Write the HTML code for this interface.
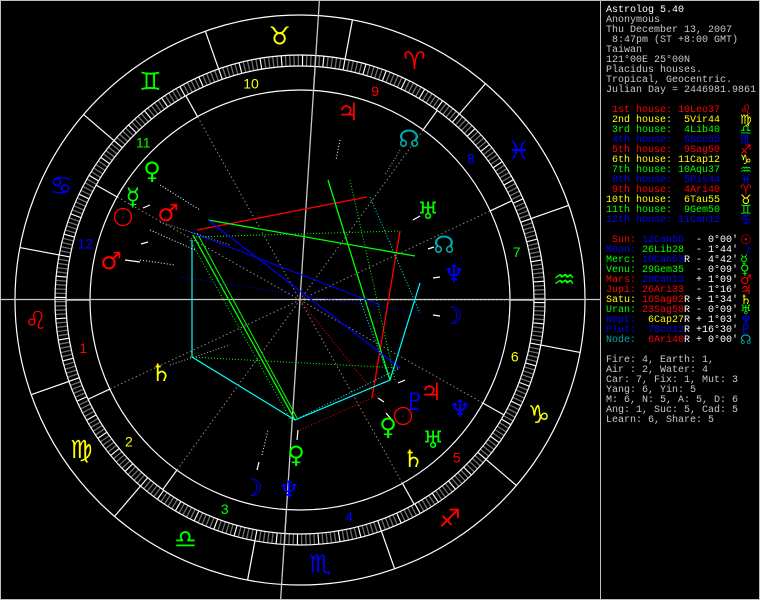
<!DOCTYPE html>
<html><head><meta charset="utf-8"><style>
html,body{margin:0;padding:0;background:#000;}
#w{position:relative;width:760px;height:600px;background:#000;overflow:hidden;}
#frame{position:absolute;left:0;top:0;width:758px;height:598px;border:1px solid #c0c0c0;}
#div{position:absolute;left:600px;top:0;width:1px;height:600px;background:#c0c0c0;}
#p{position:absolute;left:606px;top:6px;font:10px/10px "Liberation Mono",monospace;white-space:pre;color:#fff;}
#p div{height:10px;}
.r{color:#f00}.y{color:#ff0}.g{color:#0f0}.b{color:#00f}.t{color:#0aa}.h{color:#c8c8c8}
.gl{position:absolute;font:13px/10px "DejaVu Sans",sans-serif;}
svg{position:absolute;left:0;top:0;}
</style></head><body><div id="w">
<svg id="s" width="600" height="600" viewBox="0 0 600 600"></svg>
<div id="frame"></div><div id="div"></div>
<div id="p"><div>Astrolog 5.40</div><div class="h">Anonymous</div><div class="h">Thu December 13, 2007</div><div class="h"> 8:47pm (ST +8:00 GMT)</div><div class="h">Taiwan</div><div class="h">121°00E 25°00N</div><div class="h">Placidus houses.</div><div class="h">Tropical, Geocentric.</div><div class="h">Julian Day = 2446981.9861</div><div></div><div class="r"> 1st house: 10Leo37</div><div class="y"> 2nd house:  5Vir44</div><div class="g"> 3rd house:  4Lib40</div><div class="b"> 4th house:  6Sco55</div><div class="r"> 5th house:  9Sag50</div><div class="y"> 6th house: 11Cap12</div><div class="g"> 7th house: 10Aqu37</div><div class="b"> 8th house:  5Pis44</div><div class="r"> 9th house:  4Ari40</div><div class="y">10th house:  6Tau55</div><div class="g">11th house:  9Gem50</div><div class="b">12th house: 11Can12</div><div></div><div><span class="r"> Sun:</span> <span class="b">12Can56</span>  - 0°00'</div><div><span class="b">Moon:</span> <span class="g">26Lib28</span>  - 1°44'</div><div><span class="g">Merc:</span> <span class="b">10Can53</span>R - 4°42'</div><div><span class="g">Venu:</span> <span class="g">29Gem35</span>  - 0°09'</div><div><span class="r">Mars:</span> <span class="b">29Can13</span>  + 1°09'</div><div><span class="r">Jupi:</span> <span class="r">26Ari33</span>  - 1°16'</div><div><span class="y">Satu:</span> <span class="r">16Sag02</span>R + 1°34'</div><div><span class="g">Uran:</span> <span class="r">23Sag58</span>R - 0°09'</div><div><span class="b">Nept:</span> <span class="y"> 6Cap27</span>R + 1°03'</div><div><span class="b">Plut:</span> <span class="b"> 7Sco12</span>R +16°30'</div><div><span class="t">Node:</span> <span class="r"> 6Ari40</span>R + 0°00'</div><div></div><div class="h">Fire: 4, Earth: 1,</div><div class="h">Air : 2, Water: 4</div><div class="h">Car: 7, Fix: 1, Mut: 3</div><div class="h">Yang: 6, Yin: 5</div><div class="h">M: 6, N: 5, A: 5, D: 6</div><div class="h">Ang: 1, Suc: 5, Cad: 5</div><div class="h">Learn: 6, Share: 5</div></div>
<div id="gls"></div>
<script>
var s=document.getElementById('s'),o='';
var C=300,D=Math.PI/180;
function P(r,th){return [C+r*Math.cos(th*D),C-r*Math.sin(th*D)];}
function L(a,b,c,d,col,w,da){o+='<line x1="'+a+'" y1="'+b+'" x2="'+c+'" y2="'+d+'" stroke="'+col+'" stroke-width="'+(w||1)+'"'+(da?' stroke-dasharray="'+da+'"':'')+'/>';}
function RL(r1,r2,th,col,w,da){var a=P(r1,th),b=P(r2,th);L(a[0],a[1],b[0],b[1],col,w,da);}
function Ci(r){o+='<circle cx="300" cy="300" r="'+r+'" fill="none" stroke="#fff" stroke-width="1.2"/>';}
function T(x,y,t,col,sz,fam){o+='<text x="'+x+'" y="'+y+'" fill="'+col+'" font-size="'+sz+'" font-family="'+(fam||'DejaVu Sans')+'" text-anchor="middle" dominant-baseline="central">'+t+'</text>';}
var off=49.4;
o+='<path d="';var p='';
for(var i=0;i<360;i++){var th=i+off,a=P(234,th),b=P(245,th);p+='M'+a[0].toFixed(1)+' '+a[1].toFixed(1)+'L'+b[0].toFixed(1)+' '+b[1].toFixed(1);}
o+=p+'" stroke="#6e6e6e" stroke-width="1.3"/>';
for(var i=0;i<360;i+=5){RL(234,245,i+off,'#fff',1);}
Ci(285);Ci(245);Ci(234);Ci(210);
for(var i=0;i<12;i++)RL(245,285,i*30+off,'#fff',1.2);
var sg=['♈','♉','♊','♋','♌','♍','♎','♏','♐','♑','♒','♓'],ec=['#f00','#ff0','#0f0','#00f'];
for(var i=0;i<12;i++){var a=P(265,i*30+15+off);T(a[0],a[1],sg[i]+'\uFE0E',ec[i%4],25);}
var hc=[130.6,155.7,184.7,216.9,249.8,281.2,310.6,335.7,4.7,36.9,69.8,101.2];
var hcol=['#f00','#ff0','#0f0','#00f'];
for(var i=0;i<12;i++){var th=hc[i]+off;RL(210,234,th,'#fff',1.2);
 if(i!=0&&i!=9)RL(0,210,th,'#8a8a8a',1,'1.5 2.5');
 var d=((hc[(i+1)%12]-hc[i])+360)%360,a=P(222,hc[i]+d/2+off);T(a[0],a[1],(i+1),hcol[i%4],14,'Liberation Sans');}
L(0,299.5,600,299.5,'#c8c8c8',1.3);
var a=P(320,36.9+off),b=P(-320,36.9+off);L(a[0],a[1],b[0],b[1],'#c8c8c8',1.3);
L(197,230,367,197,'#f00',1.3);L(400,231,372,398,'#f00',1.3);
L(208,220,415,256,'#0f0',1.3);L(328,180,390,380,'#0f0',1.3);
L(193,235,295,420,'#0f0',1.3);L(197,233,297,418,'#0f0',1);L(190,240,292,422,'#0f0',1,'1 2');
L(193,237,400,231,'#0f0',1,'1 2');L(190,357,400,368,'#0f0',1,'1 2');L(350,180,395,380,'#0f0',1,'1 2');
L(208,220,400,368,'#00f',1.2);L(180,277,420,313,'#00f',1,'1 2');L(190,232,380,305,'#00f',1);
o+='<polyline points="192,240 192,357 295,420 390,380 420,283" fill="none" stroke="#0ff" stroke-width="1.2"/>';
L(370,197,420,313,'#0ff',1,'1 2');L(295,420,400,368,'#0ff',1,'1 2');L(390,380,360,300,'#0ff',1,'1 2');
L(300,430,372,398,'#f00',1,'1 2');L(300,300,380,400,'#f00',1,'1 2');
L(143,208,150,205,'#fff',1.2);L(140,262,125,260,'#fff',1.2);L(141,244,148,242,'#fff',1.2);
L(413,220,420,216,'#fff',1.2);L(428,249,434,247,'#fff',1.2);L(433,278,440,277,'#fff',1.2);L(433,315,440,316,'#fff',1.2);
L(398,383,405,380,'#fff',1.2);L(378,398,384,402,'#fff',1.2);L(392,420,386,413,'#fff',1.2);
L(297,440,298,430,'#fff',1.2);L(257,470,259,462,'#fff',1.2);
L(340,140,336,160,'#fff',1,'1 2');L(400,150,385,175,'#aaa',1,'1 2');L(160,222,230,245,'#aaa',1,'1 2');
L(150,230,195,250,'#fff',1,'1 2');L(140,260,175,265,'#fff',1,'1 2');L(160,185,200,210,'#fff',1,'1 2');
L(170,365,230,345,'#aaa',1,'1 2');L(262,455,268,430,'#fff',1,'1 2');
var G=[['♀','#0f0',152,171],['☿','#0f0',133,197],['☉','#f00',123,217],['♂','#f00',168,213],['♂','#f00',111,261],['♄','#ff0',161,373],
['♃','#f00',348,112],['☊','#0aa',409,139],['♅','#0f0',428,211],['☊','#0aa',444,245],['♆','#00f',454,274],['☽','#00f',452,316],
['♃','#f00',431,392],['♇','#00f',415,402],['☉','#f00',403,416],['♀','#0f0',388,427],['♅','#0f0',433,440],['♄','#ff0',413,459],['♆','#00f',460,409],
['♀','#0f0',296,455],['☽','#00f',252,488],['♆','#00f',289,490]];
for(var i=0;i<G.length;i++){if(G[i][0]=='☉'){o+='<circle cx="'+G[i][2]+'" cy="'+G[i][3]+'" r="8.5" fill="none" stroke="#f00" stroke-width="1.3"/><rect x="'+(G[i][2]-0.5)+'" y="'+(G[i][3]-0.5)+'" width="1.2" height="1.2" fill="#f00"/>';}
 else T(G[i][2],G[i][3],G[i][0]+'\uFE0E',G[i][1],24);}
s.innerHTML=o;
var hg=['♌','♍','♎','♏','♐','♑','♒','♓','♈','♉','♊','♋'],pg=['☉','☽','☿','♀','♂','♃','♄','♅','♆','♇','☊'],
pc=['#f00','#00f','#0f0','#0f0','#f00','#f00','#ff0','#0f0','#00f','#00f','#0aa'],h='';
for(var i=0;i<12;i++)h+='<div class="gl" style="left:740px;top:'+(106+i*10)+'px;color:'+hcol[i%4]+'">'+hg[i]+'\uFE0E</div>';
for(var i=0;i<11;i++)h+='<div class="gl" style="left:740px;top:'+(236+i*10)+'px;color:'+pc[i]+'">'+pg[i]+'\uFE0E</div>';
document.getElementById('gls').innerHTML=h;
</script>
</div></body></html>
